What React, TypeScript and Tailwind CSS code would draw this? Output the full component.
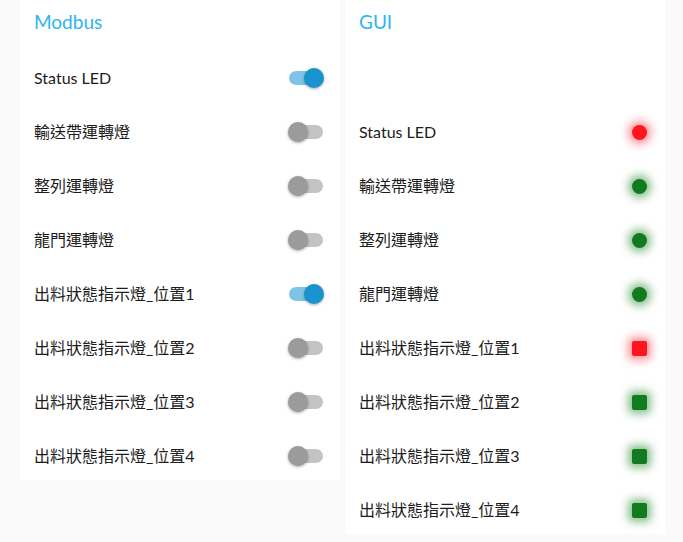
const font = "font-['Lato','Noto_Sans_CJK_TC',sans-serif]"

const modbus = [
  { label: 'Status LED', on: true },
  { label: '輸送帶運轉燈', on: false },
  { label: '整列運轉燈', on: false },
  { label: '龍門運轉燈', on: false },
  { label: '出料狀態指示燈_位置1', on: true },
  { label: '出料狀態指示燈_位置2', on: false },
  { label: '出料狀態指示燈_位置3', on: false },
  { label: '出料狀態指示燈_位置4', on: false },
]

const gui = [
  { label: 'Status LED', red: true, square: false },
  { label: '輸送帶運轉燈', red: false, square: false },
  { label: '整列運轉燈', red: false, square: false },
  { label: '龍門運轉燈', red: false, square: false },
  { label: '出料狀態指示燈_位置1', red: true, square: true },
  { label: '出料狀態指示燈_位置2', red: false, square: true },
  { label: '出料狀態指示燈_位置3', red: false, square: true },
  { label: '出料狀態指示燈_位置4', red: false, square: true },
]

function Toggle({ on }: { on: boolean }) {
  return (
    <div className="relative w-[36px] h-[20px]">
      <div
        className={`absolute left-[1px] right-[1px] top-[3px] h-[14px] rounded-full ${
          on ? 'bg-[#7fc4e6]' : 'bg-[#c4c4c4]'
        }`}
      />
      <div
        className={`absolute top-0 w-[20px] h-[20px] rounded-full shadow-[0_1px_3px_rgba(0,0,0,0.35)] ${
          on ? 'right-0 bg-[#1893cf]' : 'left-0 bg-[#9b9b9b]'
        }`}
      />
    </div>
  )
}

function Led({ red, square }: { red: boolean; square: boolean }) {
  return (
    <div
      className={`w-[15px] h-[15px] ${square ? 'rounded-[2px]' : 'rounded-full'} ${
        red
          ? 'bg-[#ff1420] shadow-[0_0_8px_4px_rgba(255,40,50,0.5)]'
          : 'bg-[#127a1f] shadow-[0_0_8px_4px_rgba(20,130,30,0.5)]'
      }`}
    />
  )
}

function Title({ children }: { children: string }) {
  return (
    <div className="h-[48px] flex items-center pl-[14px] pb-[4px] text-[19px] text-[#2db5f2]">
      {children}
    </div>
  )
}

export default function App() {
  return (
    <div className={`min-h-[542px] bg-[#fafafa] flex items-start gap-[5px] pl-[20px] ${font}`}>
      <div className="w-[320px] bg-white flex flex-col gap-[6px]">
        <Title>Modbus</Title>
        {modbus.map((r) => (
          <div key={r.label} className="h-[48px] flex items-center justify-between pl-[14px] pr-[16px]">
            <span className="text-[16px] text-[#1c1c1c]">{r.label}</span>
            <Toggle on={r.on} />
          </div>
        ))}
      </div>
      <div className="w-[320px] bg-white flex flex-col gap-[6px]">
        <Title>GUI</Title>
        <div className="h-[48px]" />
        {gui.map((r) => (
          <div key={r.label} className="h-[48px] flex items-center justify-between pl-[14px] pr-[18px]">
            <span className="text-[16px] text-[#1c1c1c]">{r.label}</span>
            <Led red={r.red} square={r.square} />
          </div>
        ))}
      </div>
    </div>
  )
}
